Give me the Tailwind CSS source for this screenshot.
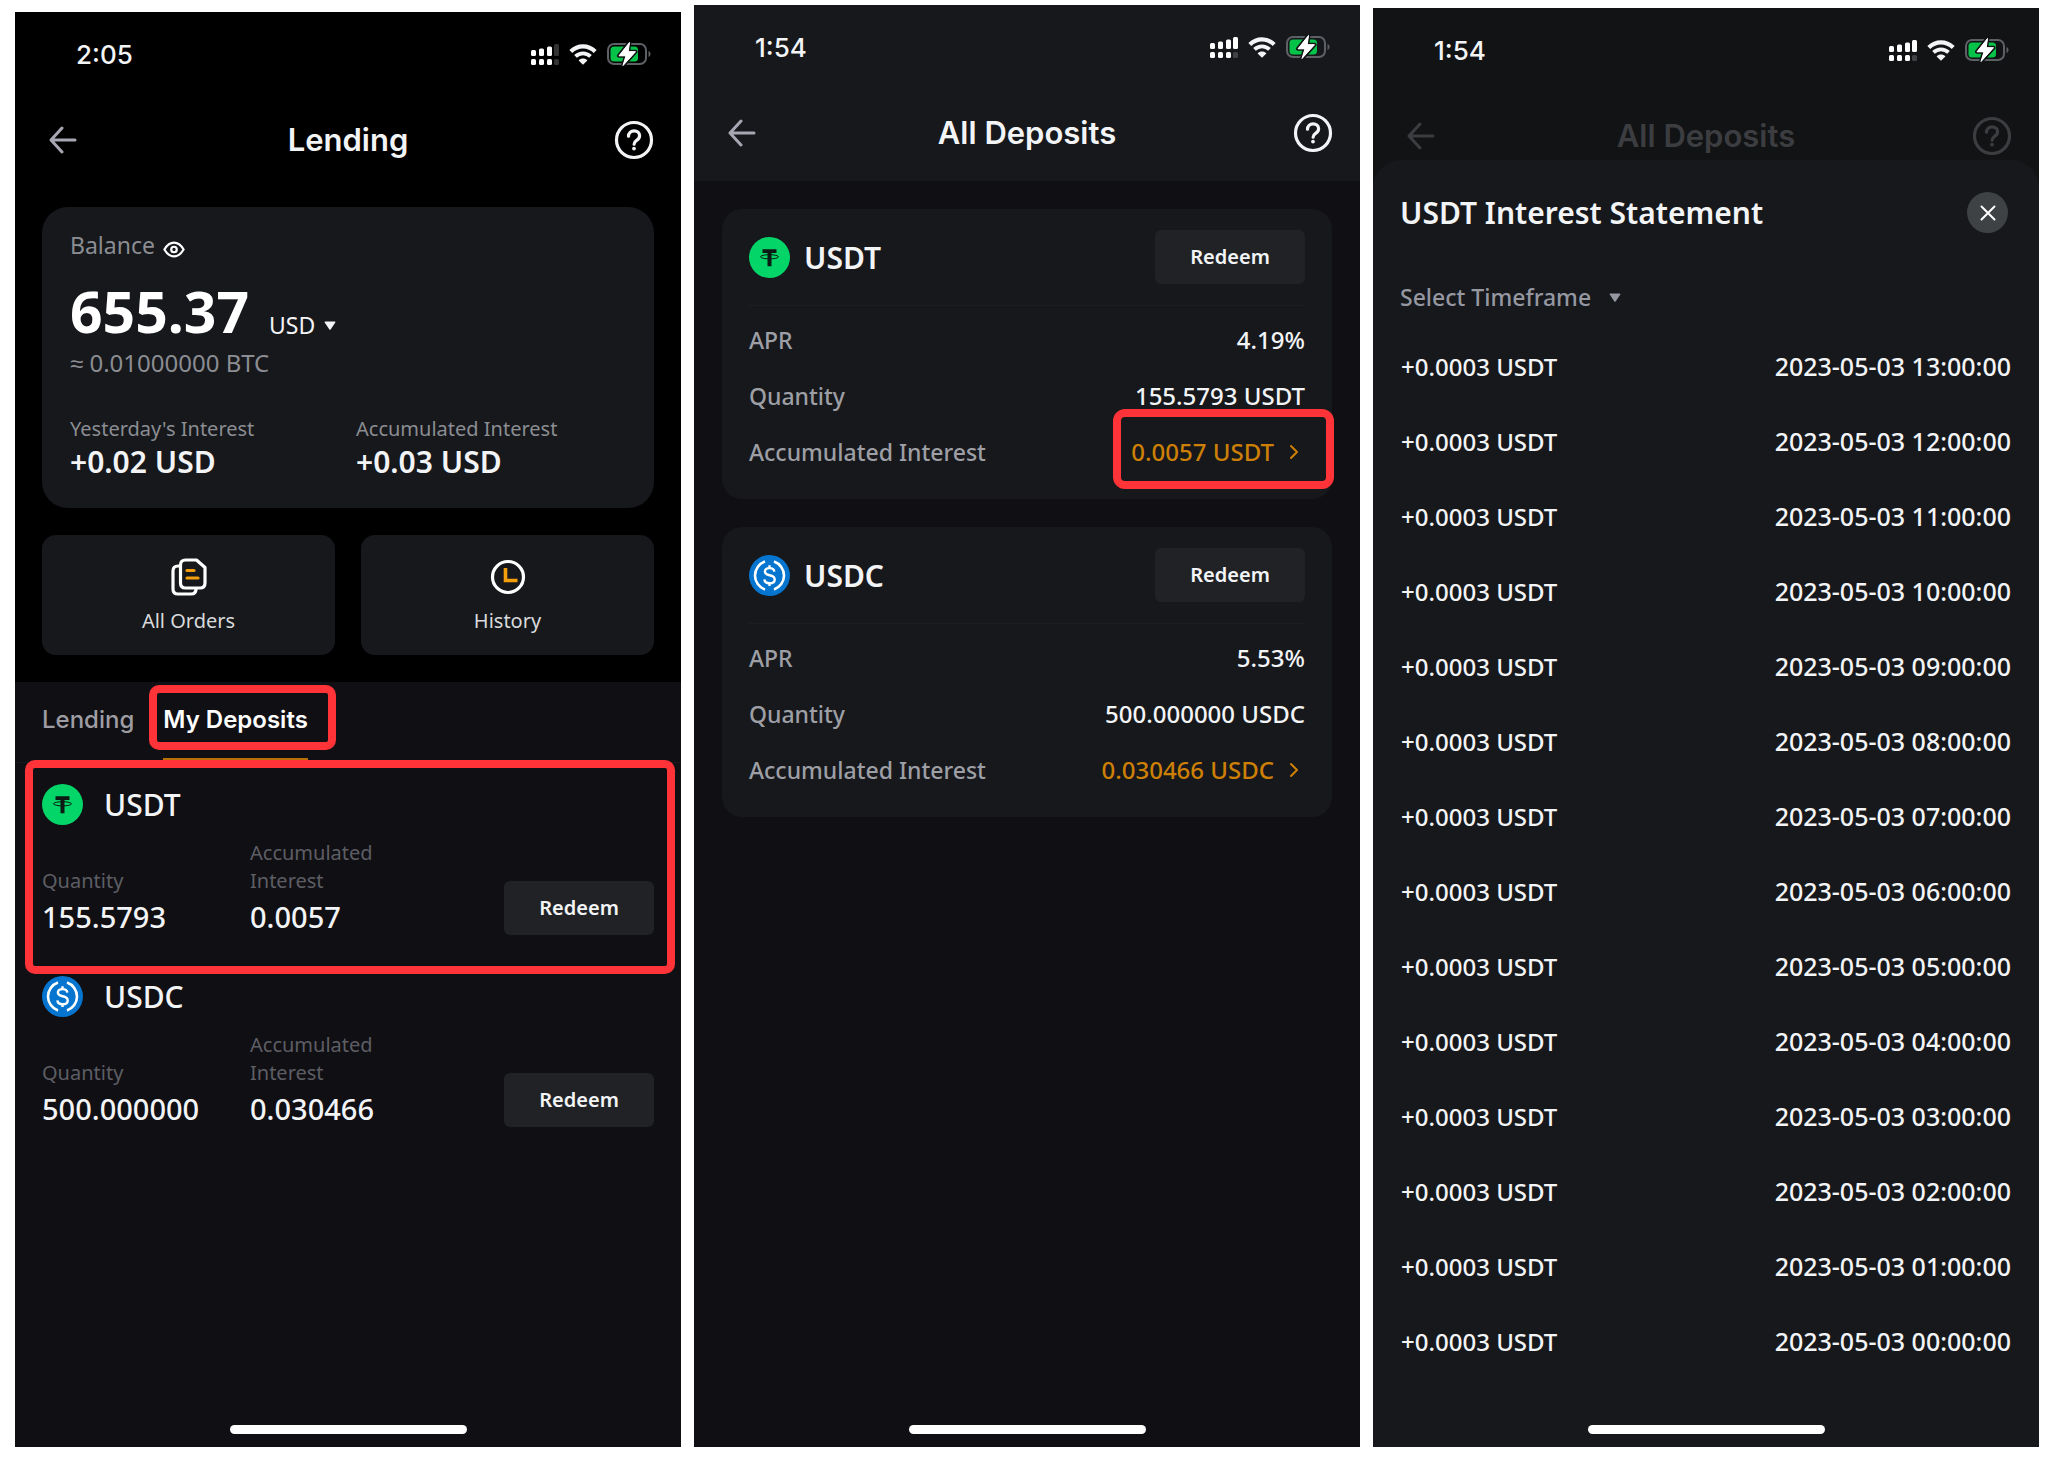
<!DOCTYPE html>
<html lang="en">
<head>
    <meta charset="UTF-8">
    <meta name="viewport" content="width=device-width, initial-scale=1.0">
    <title>Lending - My Deposits</title>
    <script src="https://cdn.jsdelivr.net/npm/@tailwindcss/browser@4"></script>
</head>
<body class="bg-white text-[#f3f4f6] font-['Noto_Sans',sans-serif]">

    <!-- Shared icons -->
    <svg class="hidden" aria-hidden="true">
        <symbol id="icon-back" viewBox="0 0 28 28">
            <path d="M26 14H2M13 2 2 14l11 12" fill="none" stroke="currentColor" stroke-width="3" stroke-linecap="round" stroke-linejoin="round"/>
        </symbol>
        <symbol id="icon-help" viewBox="0 0 40 40">
            <circle cx="20" cy="20" r="17.500" fill="none" stroke="currentColor" stroke-width="3.200"/>
            <path d="M14.500 16.200c0-3.200 2.400-5.400 5.600-5.400s5.500 2.200 5.500 5c0 2.300-1.300 3.500-3 4.600-1.800 1.200-2.500 1.900-2.500 3.800" fill="none" stroke="currentColor" stroke-width="3.200" stroke-linecap="round"/>
            <circle cx="20" cy="28.600" r="1.900" fill="currentColor"/>
        </symbol>
        <symbol id="icon-wifi" viewBox="0 0 28 21">
            <path d="M1.800 7.400C8.800 .600 19.200 .600 26.200 7.400" fill="none" stroke="currentColor" stroke-width="4.200"/>
            <path d="M6.500 12.400c4.300-4.100 10.700-4.100 15 0" fill="none" stroke="currentColor" stroke-width="3.800"/>
            <path d="M14 20.800l-4.400-4.400c2.400-2.400 6.400-2.400 8.800 0z" fill="currentColor"/>
        </symbol>
        <symbol id="icon-battery" viewBox="0 0 44 24">
            <rect x="1" y="2" width="38" height="20" rx="6" fill="none" stroke="#5d6064" stroke-width="2"/>
            <path d="M41.500 9v6c1.300-.500 2-1.600 2-3s-.700-2.500-2-3z" fill="#5d6064"/>
            <rect x="3.500" y="4.500" width="27.500" height="15" rx="3.500" fill="#05c248"/>
            <path d="M22.500 .500 12 13.800h7L16 23.500l12.500-13.800h-7.300z" fill="#fff" stroke="#101214" stroke-width="4" paint-order="stroke" stroke-linejoin="round"/>
            <path d="M22.500 .500 12 13.800h7L16 23.500l12.500-13.800h-7.300z" fill="#fff" stroke="#fff" stroke-width="1" stroke-linejoin="round"/>
        </symbol>
        <symbol id="icon-usdt" viewBox="0 0 41 41">
            <circle cx="20.500" cy="20.500" r="20.500" fill="#03d569"/>
            <path d="M13.500 12.300h14v3.600h-5v13.300h-4v-13.300h-5z" fill="#0b1a12"/>
            <ellipse cx="20.500" cy="19.800" rx="9" ry="2.100" fill="none" stroke="#0b1a12" stroke-width="1"/>
        </symbol>
        <symbol id="icon-usdc" viewBox="0 0 41 41">
            <circle cx="20.500" cy="20.500" r="20.500" fill="#0575cf"/>
            <path d="M16 6.500a14.800 14.800 0 0 0 0 28M25 6.500a14.800 14.800 0 0 1 0 28" fill="none" stroke="#fff" stroke-width="2.600"/>
            <path d="M25.300 16.600c-.200-2.300-1.900-3.500-4.700-3.500-2.900 0-4.700 1.400-4.700 3.500 0 2.300 1.700 3.100 4.700 3.700 3.200.600 5.100 1.500 5.100 4.100 0 2.300-2 3.800-5.100 3.800-3.200 0-5-1.400-5.200-3.900M20.500 10.200v3M20.500 28v3" fill="none" stroke="#fff" stroke-width="2.400"/>
        </symbol>
        <symbol id="icon-caret" viewBox="0 0 12 9">
            <path d="M1.200.500h9.600q1 0 .500.900L6.800 8.200q-.800 1-1.600 0L.700 1.400Q.200.500 1.200.500z" fill="currentColor"/>
        </symbol>
        <symbol id="icon-chevron" viewBox="0 0 10 16">
            <path d="M2 2l6 6-6 6" fill="none" stroke="currentColor" stroke-width="2" stroke-linecap="round" stroke-linejoin="round"/>
        </symbol>
    </svg>

    <main class="grid min-h-screen grid-cols-3 gap-[13px] pr-[9px] pb-2.5 pl-[15px]">

        <!-- Lending -->
        <section class="mt-3 flex flex-col bg-[#100f14]">
            <div class="bg-black">
                <div class="flex h-[84px] items-center justify-between pr-[30px] pl-[61px]">
                    <time class="font-['Inter'] text-[26px] font-medium">2:05</time>
                    <div class="flex items-center gap-2.5">
                        <svg class="h-[21px] w-7" viewBox="0 0 28 21" fill="#fff">
                            <rect x="0" y="6" width="5" height="6" rx="1.500"/><rect x="8" y="4.500" width="5" height="7.500" rx="1.500"/><rect x="16" y="2.500" width="5" height="9.500" rx="1.500"/><rect x="23" y="0" width="5" height="12" rx="1.500" fill="#333"/>
                            <rect x="0" y="15" width="5" height="6" rx="1.500"/><rect x="8" y="15" width="5" height="6" rx="1.500"/><rect x="16" y="15" width="5" height="6" rx="1.500"/><rect x="23" y="15" width="5" height="6" rx="1.500" fill="#333"/>
                        </svg>
                        <svg class="h-[21px] w-7"><use href="#icon-wifi"/></svg>
                        <svg class="h-6 w-11"><use href="#icon-battery"/></svg>
                    </div>
                </div>
                <header class="grid h-[88px] grid-cols-[40px_1fr_40px] items-center px-[27px]">
                    <button type="button" aria-label="Back" class="pl-[7px] text-[#a6a7b2]"><svg class="size-7"><use href="#icon-back"/></svg></button>
                    <h1 class="text-center font-['Inter'] text-[31px] font-semibold">Lending</h1>
                    <button type="button" aria-label="Help"><svg class="size-10"><use href="#icon-help"/></svg></button>
                </header>

                <div class="mx-[27px] mt-[23px] rounded-[26px] bg-[#16181c] px-7 pt-[22px] pb-[27px]">
                    <div class="flex items-center gap-2 leading-8 text-[#8b8d92]">
                        <span class="text-[23px] leading-8">Balance</span>
                        <button type="button" aria-label="Hide balance" class="mt-2 text-white">
                            <svg class="h-[17px] w-[22px]" viewBox="0 0 24 18" fill="none" stroke="currentColor" stroke-width="2.400">
                                <path d="M1.500 9Q6 1.500 12 1.500T22.500 9Q18 16.500 12 16.500T1.500 9z" stroke-linejoin="round"/><circle cx="12" cy="9" r="3"/>
                            </svg>
                        </button>
                    </div>
                    <div class="mt-5 flex items-end">
                        <span class="text-[57px] leading-[60px] font-bold text-white">655.37</span>
                        <label class="ml-5 flex items-center gap-2">
                            <select aria-label="Currency" class="appearance-none text-[23px] leading-8"><option>USD</option></select>
                            <svg class="h-[9px] w-3"><use href="#icon-caret"/></svg>
                        </label>
                    </div>
                    <p class="mt-1.5 text-2xl leading-8 text-[#8b8d92]">≈ 0.01000000 BTC</p>
                    <dl class="mt-9 grid grid-cols-[286px_1fr]">
                        <div>
                            <dt class="text-xl leading-7 text-[#8b8d92]">Yesterday's Interest</dt>
                            <dd class="text-[30px] leading-[38px] font-semibold">+0.02 USD</dd>
                        </div>
                        <div>
                            <dt class="text-xl leading-7 text-[#8b8d92]">Accumulated Interest</dt>
                            <dd class="text-[30px] leading-[38px] font-semibold">+0.03 USD</dd>
                        </div>
                    </dl>
                </div>

                <div class="mx-[27px] mt-[27px] grid grid-cols-2 gap-[26px] pb-[27px]">
                    <button type="button" class="flex flex-col items-center rounded-[14px] bg-[#16181c] pt-[23px] pb-5 text-xl leading-7 text-[#d9dadd]">
                        <svg class="h-[38px] w-9" viewBox="0 0 36 38" fill="none" stroke-width="3.200" stroke-linejoin="round" stroke-linecap="round">
                            <path d="M8.500 8H7q-5 0-5 5v18q0 5 5 5h13q5 0 5-5" stroke="#fff"/>
                            <path d="M14.500 2h11l8.500 7.500V25q0 5-5 5H14.500q-5 0-5-5V7q0-5 5-5z" stroke="#fff"/>
                            <path d="M16 12.500h7M16 20h11" stroke="#f59e0b"/>
                        </svg>
                        <span class="mt-[11px]">All Orders</span>
                    </button>
                    <button type="button" class="flex flex-col items-center rounded-[14px] bg-[#16181c] pt-[23px] pb-5 text-xl leading-7 text-[#d9dadd]">
                        <svg class="h-[38px] w-9" viewBox="0 0 36 38" fill="none">
                            <circle cx="18" cy="19" r="15.500" stroke="#fff" stroke-width="3.200"/>
                            <path d="M15.500 10v12.500h12" stroke="#f59e0b" stroke-width="3.600"/>
                        </svg>
                        <span class="mt-[11px]">History</span>
                    </button>
                </div>
            </div>

            <nav role="tablist" class="flex h-[81px] gap-[29px] border-b border-[#19191d] px-[27px] font-['Inter'] text-2xl font-medium">
                <button type="button" role="tab" aria-selected="false" class="pb-1 text-[#9d9da3]">Lending</button>
                <button type="button" role="tab" aria-selected="true" class="relative pb-1 font-semibold text-white">
                    My Deposits
                    <span class="absolute inset-x-0 bottom-0 h-1 bg-[#b87008]"></span>
                    <span class="absolute top-[3px] -right-7 bottom-3 -left-3.5 rounded-[10px] border-8 border-[#ff3338]"></span>
                </button>
            </nav>

            <article class="relative px-[27px] pt-[21px] pb-5">
                <h2 class="flex items-center gap-[21px] text-[30px] leading-[41px] font-medium"><svg class="size-[41px]"><use href="#icon-usdt"/></svg>USDT</h2>
                <div class="mt-3.5 grid grid-cols-[208px_1fr_150px] items-end">
                    <div>
                        <div class="text-xl leading-7 text-[#5d5e64]">Quantity</div>
                        <div class="mt-1 text-[29px] leading-9 font-medium">155.5793</div>
                    </div>
                    <div>
                        <div class="w-[150px] text-xl leading-7 text-[#5d5e64]">Accumulated Interest</div>
                        <div class="mt-1 text-[29px] leading-9 font-medium">0.0057</div>
                    </div>
                    <button type="button" class="h-[54px] rounded-md bg-[#202226] text-xl font-semibold">Redeem</button>
                </div>
                <span class="absolute -top-[3px] right-1.5 -bottom-[19px] left-2.5 rounded-[10px] border-8 border-[#ff3338]"></span>
            </article>

            <article class="px-[27px] pt-[21px] pb-5">
                <h2 class="flex items-center gap-[21px] text-[30px] leading-[41px] font-medium"><svg class="size-[41px]"><use href="#icon-usdc"/></svg>USDC</h2>
                <div class="mt-3.5 grid grid-cols-[208px_1fr_150px] items-end">
                    <div>
                        <div class="text-xl leading-7 text-[#5d5e64]">Quantity</div>
                        <div class="mt-1 text-[29px] leading-9 font-medium">500.000000</div>
                    </div>
                    <div>
                        <div class="w-[150px] text-xl leading-7 text-[#5d5e64]">Accumulated Interest</div>
                        <div class="mt-1 text-[29px] leading-9 font-medium">0.030466</div>
                    </div>
                    <button type="button" class="h-[54px] rounded-md bg-[#202226] text-xl font-semibold">Redeem</button>
                </div>
            </article>

            <div class="mx-auto mt-auto mb-[13px] h-[9px] w-[237px] rounded-full bg-white"></div>
        </section>

        <!-- All Deposits -->
        <section class="mt-[5px] flex flex-col bg-[#100f14]">
            <div class="bg-[#16181c] pb-1">
                <div class="flex h-[84px] items-center justify-between pr-[30px] pl-[61px]">
                    <time class="font-['Inter'] text-[26px] font-medium">1:54</time>
                    <div class="flex items-center gap-2.5">
                        <svg class="h-[21px] w-7" viewBox="0 0 28 21" fill="#fff">
                            <rect x="0" y="6" width="5" height="6" rx="1.500"/><rect x="8" y="4.500" width="5" height="7.500" rx="1.500"/><rect x="16" y="2.500" width="5" height="9.500" rx="1.500"/><rect x="23" y="0" width="5" height="12" rx="1.500"/>
                            <rect x="0" y="15" width="5" height="6" rx="1.500"/><rect x="8" y="15" width="5" height="6" rx="1.500"/><rect x="16" y="15" width="5" height="6" rx="1.500"/><rect x="23" y="15" width="5" height="6" rx="1.500" fill="#404246"/>
                        </svg>
                        <svg class="h-[21px] w-7"><use href="#icon-wifi"/></svg>
                        <svg class="h-6 w-11"><use href="#icon-battery"/></svg>
                    </div>
                </div>
                <header class="grid h-[88px] grid-cols-[40px_1fr_40px] items-center px-[27px]">
                    <button type="button" aria-label="Back" class="pl-[7px] text-[#a6a7b2]"><svg class="size-7"><use href="#icon-back"/></svg></button>
                    <h1 class="text-center font-['Inter'] text-[31px] font-semibold">All Deposits</h1>
                    <button type="button" aria-label="Help"><svg class="size-10"><use href="#icon-help"/></svg></button>
                </header>
            </div>

            <div class="flex flex-col gap-7 px-7 pt-7">
                <article class="rounded-[20px] bg-[#16181c] px-[27px] pt-[21px] pb-[19px]">
                    <div class="flex items-center justify-between border-b border-[#1c1e22] pb-[21px]">
                        <h2 class="flex items-center gap-3.5 text-[30px] leading-[41px] font-semibold"><svg class="size-[41px]"><use href="#icon-usdt"/></svg>USDT</h2>
                        <button type="button" class="h-[54px] w-[150px] rounded-md bg-[#202226] text-xl font-semibold">Redeem</button>
                    </div>
                    <dl class="pt-1.5 text-2xl leading-14 font-medium">
                        <div class="flex justify-between"><dt class="text-[23px] text-[#9d9fa5]">APR</dt><dd>4.19%</dd></div>
                        <div class="flex justify-between"><dt class="text-[23px] text-[#9d9fa5]">Quantity</dt><dd>155.5793 USDT</dd></div>
                        <div class="flex justify-between">
                            <dt class="text-[23px] text-[#9d9fa5]">Accumulated Interest</dt>
                            <dd class="relative">
                                <a href="#statement" class="flex items-center gap-[15px] pr-1.5 text-[#cd8005]">0.0057 USDT<svg class="h-4 w-2.5"><use href="#icon-chevron"/></svg></a>
                                <span class="absolute -top-[15px] -right-[29px] -bottom-[9px] -left-[18px] rounded-xl border-8 border-[#ff3338]"></span>
                            </dd>
                        </div>
                    </dl>
                </article>

                <article class="rounded-[20px] bg-[#16181c] px-[27px] pt-[21px] pb-[19px]">
                    <div class="flex items-center justify-between border-b border-[#1c1e22] pb-[21px]">
                        <h2 class="flex items-center gap-3.5 text-[30px] leading-[41px] font-semibold"><svg class="size-[41px]"><use href="#icon-usdc"/></svg>USDC</h2>
                        <button type="button" class="h-[54px] w-[150px] rounded-md bg-[#202226] text-xl font-semibold">Redeem</button>
                    </div>
                    <dl class="pt-1.5 text-2xl leading-14 font-medium">
                        <div class="flex justify-between"><dt class="text-[23px] text-[#9d9fa5]">APR</dt><dd>5.53%</dd></div>
                        <div class="flex justify-between"><dt class="text-[23px] text-[#9d9fa5]">Quantity</dt><dd>500.000000 USDC</dd></div>
                        <div class="flex justify-between">
                            <dt class="text-[23px] text-[#9d9fa5]">Accumulated Interest</dt>
                            <dd><a href="#statement" class="flex items-center gap-[15px] pr-1.5 text-[#cd8005]">0.030466 USDC<svg class="h-4 w-2.5"><use href="#icon-chevron"/></svg></a></dd>
                        </div>
                    </dl>
                </article>
            </div>

            <div class="mx-auto mt-auto mb-[13px] h-[9px] w-[237px] rounded-full bg-white"></div>
        </section>

        <!-- Interest Statement -->
        <section class="mt-2 flex flex-col bg-[#121315]">
            <div class="flex h-[84px] items-center justify-between pr-[30px] pl-[61px]">
                <time class="font-['Inter'] text-[26px] font-medium">1:54</time>
                <div class="flex items-center gap-2.5">
                    <svg class="h-[21px] w-7" viewBox="0 0 28 21" fill="#fff">
                        <rect x="0" y="6" width="5" height="6" rx="1.500"/><rect x="8" y="4.500" width="5" height="7.500" rx="1.500"/><rect x="16" y="2.500" width="5" height="9.500" rx="1.500"/><rect x="23" y="0" width="5" height="12" rx="1.500"/>
                        <rect x="0" y="15" width="5" height="6" rx="1.500"/><rect x="8" y="15" width="5" height="6" rx="1.500"/><rect x="16" y="15" width="5" height="6" rx="1.500"/><rect x="23" y="15" width="5" height="6" rx="1.500" fill="#404246"/>
                    </svg>
                    <svg class="h-[21px] w-7"><use href="#icon-wifi"/></svg>
                    <svg class="h-6 w-11"><use href="#icon-battery"/></svg>
                </div>
            </div>
            <header class="grid h-[88px] grid-cols-[40px_1fr_40px] items-center px-[27px] text-[#3c3d40]">
                <button type="button" aria-label="Back" class="pl-[7px]"><svg class="size-7"><use href="#icon-back"/></svg></button>
                <h1 class="text-center font-['Inter'] text-[31px] font-semibold">All Deposits</h1>
                <button type="button" aria-label="Help"><svg class="size-10"><use href="#icon-help"/></svg></button>
            </header>

            <div id="statement" role="dialog" aria-labelledby="statementTitle" class="-mt-5 flex flex-1 flex-col rounded-t-[28px] bg-[#16181c]">
                <div class="flex items-center justify-between pt-8 pr-[31px] pl-[27px]">
                    <h2 id="statementTitle" class="text-[30px] leading-[41px] font-semibold">USDT Interest Statement</h2>
                    <button type="button" aria-label="Close" class="grid size-[41px] place-items-center rounded-full bg-[#3e4245]">
                        <svg class="size-4" viewBox="0 0 16 16" stroke="#fff" stroke-width="2" stroke-linecap="round"><path d="M1.500 1.500l13 13M14.500 1.500l-13 13"/></svg>
                    </button>
                </div>
                <label class="mt-12 flex items-center gap-[17px] self-start pl-[27px] text-[#9597a1]">
                    <select aria-label="Timeframe" class="appearance-none text-[23px] leading-8 font-medium"><option>Select Timeframe</option></select>
                    <svg class="h-[9px] w-3"><use href="#icon-caret"/></svg>
                </label>
                <div class="mt-4 px-7">
                    <table class="w-full text-2xl font-medium">
                        <tbody id="statementRows"></tbody>
                    </table>
                </div>

                <div class="mx-auto mt-auto mb-[13px] h-[9px] w-[237px] rounded-full bg-white"></div>
            </div>
        </section>
    </main>

    <script>
        // Hourly interest payouts, newest first
        const rows = document.getElementById('statementRows');
        for (let hour = 13; hour >= 0; hour--) {
            const tr = document.createElement('tr');
            const time = '2023-05-03 ' + String(hour).padStart(2, '0') + ':00:00';
            tr.innerHTML = '<td class="h-[75px]">+0.0003 USDT</td><td class="text-right text-[25px]">' + time + '</td>';
            rows.appendChild(tr);
        }
    </script>
</body>
</html>
